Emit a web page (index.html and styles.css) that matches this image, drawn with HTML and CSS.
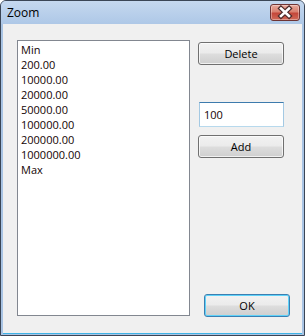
FILE: index.html
```html
<!DOCTYPE html>
<html lang="en">
<head>
  <meta charset="UTF-8" />
  <title>Zoom</title>
  <link rel="stylesheet" href="styles.css">
</head>
<body>
  <div class="window">
    <!-- Caption -->
    <div class="titlebar">
      <span class="title">Zoom</span>
      <div class="close">
        <svg width="28" height="15" viewBox="0 0 28 15">
          <path d="M10 3.5 L18 11 M18 3.5 L10 11" stroke="#4b2a2a" stroke-width="5" stroke-linecap="square" fill="none"/>
          <path d="M10 3.5 L18 11 M18 3.5 L10 11" stroke="#ffffff" stroke-width="2.6" stroke-linecap="square" fill="none"/>
        </svg>
      </div>
    </div>

    <!-- Dialog body -->
    <div class="client">
      <ul class="listbox">
        <li>Min</li>
        <li>200.00</li>
        <li>10000.00</li>
        <li>20000.00</li>
        <li>50000.00</li>
        <li>100000.00</li>
        <li>200000.00</li>
        <li>1000000.00</li>
        <li>Max</li>
      </ul>

      <div class="side">
        <button class="btn">Delete</button>
        <input class="edit" type="text" value="100" />
        <button class="btn add">Add</button>
        <button class="btn ok">OK</button>
      </div>
    </div>
  </div>
</body>
</html>
```

FILE: styles.css
```css
body {
  margin: 0;
  font-family: "Open Sans", "Noto Sans", sans-serif;
  background: #ffffff;
}

.window {
  width: 305px;
  height: 336px;
  box-sizing: border-box;
  border: 1px solid #3b4656;
  border-radius: 6px 6px 0 0;
  background: #a9c4e4;
  display: flex;
  flex-direction: column;
  overflow: hidden;
}

.titlebar {
  height: 23px;
  flex-shrink: 0;
  display: flex;
  justify-content: space-between;
  align-items: flex-start;
  padding: 0 4px 0 6px;
  background: linear-gradient(#c5d8ef, #aec8e7);
}

.title {
  margin-top: 4px;
  font-size: 12px;
  line-height: 16px;
  color: #000;
}

.close {
  margin-top: 3px;
  width: 28px;
  height: 15px;
  border: 1px solid #6e3434;
  border-radius: 3px;
  background: linear-gradient(#e8a89c 0%, #d9806f 45%, #c4473a 55%, #d06a58 100%);
  box-shadow: inset 0 0 0 1px rgba(255,255,255,0.35);
}

.close svg {
  display: block;
}

.client {
  flex: 1;
  margin: 0 2px 2px 2px;
  background: #f0f0f0;
  display: flex;
  padding: 16px 0 0 14px;
  box-shadow: 0 1px 0 #3fb3e6;
}

.listbox {
  margin: 0;
  padding: 1px 0 0 3px;
  list-style: none;
  width: 173px;
  height: 276px;
  box-sizing: border-box;
  border: 1px solid #828790;
  background: #ffffff;
  font-size: 11px;
  line-height: 15px;
  color: #140404;
}

.side {
  width: 92px;
  margin-left: 8px;
  height: 276px;
  display: flex;
  flex-direction: column;
  align-items: flex-start;
  padding-top: 2px;
  box-sizing: border-box;
}

.btn {
  width: 86px;
  height: 23px;
  padding: 0;
  font-family: "Open Sans", "Noto Sans", sans-serif;
  font-size: 11px;
  color: #000;
  border: 1px solid #707070;
  border-radius: 3px;
  background: linear-gradient(#f2f2f2 0%, #ebebeb 48%, #dddddd 52%, #cfcfcf 100%);
  box-shadow: inset 0 0 0 1px rgba(255,255,255,0.7);
}

.edit {
  margin: 37px 0 0 1px;
  width: 85px;
  height: 25px;
  box-sizing: border-box;
  padding: 0 0 0 4px;
  font-family: "Open Sans", "Noto Sans", sans-serif;
  font-size: 11px;
  color: #140404;
  border: 1px solid #a4c9e3;
  border-top-color: #3d7bad;
  border-bottom-color: #b7d9ed;
  outline: none;
  background: #ffffff;
}

.add {
  margin-top: 8px;
}

.ok {
  margin-top: auto;
  margin-left: 6px;
  margin-bottom: -1px;
  border-color: #3c7fb1;
  box-shadow: inset 0 0 0 1px #5fd2f9;
}
```
